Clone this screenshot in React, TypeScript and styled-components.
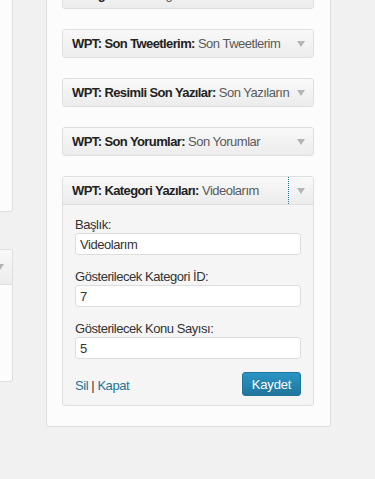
import React from "react";
import styled, { createGlobalStyle } from "styled-components";

const Global = createGlobalStyle`
  html, body { margin: 0; padding: 0; }
  body {
    background: #f1f1f1;
    font-family: "Liberation Sans", Arial, sans-serif;
    font-size: 13px;
    letter-spacing: -0.45px;
    color: #333;
    overflow: hidden;
    height: 479px;
  }
`;

const Page = styled.div`
  display: flex;
  align-items: flex-start;
  width: 375px;
  height: 479px;
  overflow: hidden;
`;

const LeftCol = styled.div`
  width: 13px;
  display: flex;
  flex-direction: column;
  margin-top: -50px;
`;

const SidePanel = styled.div<{ $h: number; $mt?: number }>`
  box-sizing: border-box;
  height: ${(p) => p.$h}px;
  margin-top: ${(p) => p.$mt ?? 0}px;
  width: 13px;
  background: #fcfcfc;
  border: 1px solid #dfdfdf;
  border-left: none;
  border-radius: 0 3px 3px 0;
  overflow: hidden;
`;

const SideHeader = styled.div`
  box-sizing: border-box;
  height: 35px;
  background: linear-gradient(#f9f9f9, #ececec);
  border-bottom: 1px solid #dfdfdf;
  display: flex;
  align-items: center;
  justify-content: flex-start;
`;

const Main = styled.div`
  box-sizing: border-box;
  margin-left: 33px;
  margin-top: -41px;
  width: 285px;
  background: #fcfcfc;
  border: 1px solid #dfdfdf;
  border-radius: 3px;
  padding: 20px 16px 20px 15px;
  display: flex;
  flex-direction: column;
  gap: 20px;
`;

const Widget = styled.div`
  border: 1px solid #dfdfdf;
  border-radius: 3px;
  background: #f5f5f5;
  overflow: hidden;
`;

const Header = styled.div<{ $open?: boolean }>`
  height: 27px;
  display: flex;
  align-items: center;
  overflow: hidden;
  background: linear-gradient(#f9f9f9, #ececec);
  border-bottom: ${(p) => (p.$open ? "1px solid #dfdfdf" : "none")};
`;

const Title = styled.div`
  flex: 1;
  min-width: 0;
  padding-left: 9px;
  white-space: nowrap;
  font-weight: bold;
  letter-spacing: -0.6px;
  color: #222;
  font-size: 13px;
`;

const Sub = styled.span`
  font-weight: normal;
  letter-spacing: -0.5px;
  color: #5a5a5a;
`;

const Toggle = styled.div<{ $focus?: boolean }>`
  width: 25px;
  height: 27px;
  flex: none;
  display: flex;
  align-items: center;
  justify-content: center;
  box-sizing: border-box;
  border-left: ${(p) => (p.$focus ? "1px dotted #21759b" : "1px solid transparent")};
`;

const Inside = styled.div`
  padding: 12px 12px 9px 12px;
  display: flex;
  flex-direction: column;
  gap: 14px;
`;

const Field = styled.div`
  display: flex;
  flex-direction: column;
`;

const Label = styled.label`
  line-height: 16px;
  color: #333;
`;

const Input = styled.div`
  box-sizing: border-box;
  height: 22px;
  background: #fff;
  border: 1px solid #dddddd;
  border-radius: 3px;
  padding: 0 4px;
  display: flex;
  align-items: center;
  color: #333;
`;

const Footer = styled.div`
  display: flex;
  justify-content: space-between;
  align-items: center;
  margin-top: -1px;
`;

const Links = styled.div`
  color: #333;
  padding-top: 3px;
`;

const Link = styled.span`
  color: #21759b;
`;

const Button = styled.div`
  box-sizing: border-box;
  width: 59px;
  height: 24px;
  border: 1px solid #21759b;
  border-radius: 3px;
  background: linear-gradient(#2a95c5, #21759b);
  color: #fff;
  display: flex;
  align-items: center;
  justify-content: center;
  font-size: 13px;
  letter-spacing: -0.2px;
`;

const Arrow = () => (
  <svg width="8" height="6" viewBox="0 0 8 6">
    <polygon points="0,0 8,0 4,6" fill="#b4b4b4" />
  </svg>
);

const widgets = [
  { t: "Kategoriler:", s: " Kategoriler" },
  { t: "WPT: Son Tweetlerim:", s: " Son Tweetlerim" },
  { t: "WPT: Resimli Son Yazılar:", s: " Son Yazıların" },
  { t: "WPT: Son Yorumlar:", s: " Son Yorumlar" },
];

const fields = [
  { l: "Başlık:", v: "Videolarım" },
  { l: "Gösterilecek Kategori İD:", v: "7" },
  { l: "Gösterilecek Konu Sayısı:", v: "5" },
];

export default function App() {
  return (
    <>
      <Global />
      <Page>
        <LeftCol>
          <SidePanel $h={262} />
          <SidePanel $h={133} $mt={37}>
            <SideHeader>
              <svg width="4" height="6" viewBox="0 0 4 6">
                <polygon points="-4,0 4,0 0,6" fill="#b4b4b4" />
              </svg>
            </SideHeader>
          </SidePanel>
        </LeftCol>
        <Main>
          {widgets.map((w) => (
            <Widget key={w.t}>
              <Header>
                <Title>
                  {w.t}
                  <Sub>{w.s}</Sub>
                </Title>
                <Toggle>
                  <Arrow />
                </Toggle>
              </Header>
            </Widget>
          ))}
          <Widget>
            <Header $open>
              <Title>
                WPT: Kategori Yazıları:<Sub> Videolarım</Sub>
              </Title>
              <Toggle $focus>
                <Arrow />
              </Toggle>
            </Header>
            <Inside>
              {fields.map((f) => (
                <Field key={f.l}>
                  <Label>{f.l}</Label>
                  <Input>{f.v}</Input>
                </Field>
              ))}
              <Footer>
                <Links>
                  <Link>Sil</Link> | <Link>Kapat</Link>
                </Links>
                <Button>Kaydet</Button>
              </Footer>
            </Inside>
          </Widget>
        </Main>
      </Page>
    </>
  );
}
